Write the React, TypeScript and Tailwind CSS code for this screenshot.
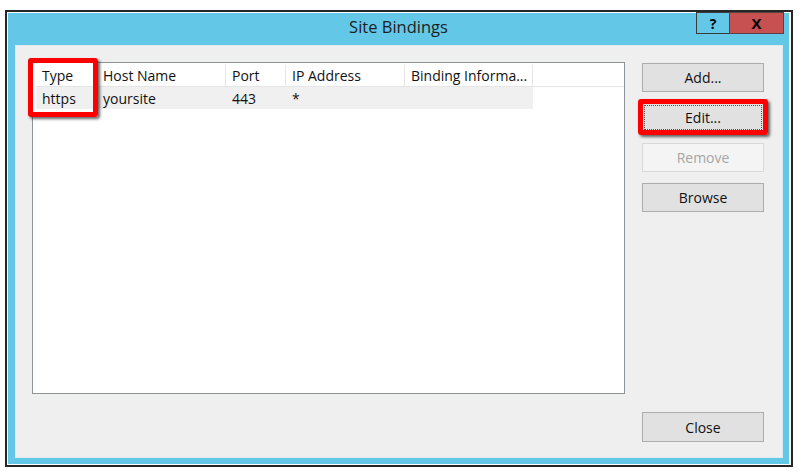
const font = { fontFamily: '"Open Sans", "Noto Sans", sans-serif' };

interface Column {
  label: string;
  width: string;
}

const columns: Column[] = [
  { label: 'Type', width: 'w-[61px]' },
  { label: 'Host Name', width: 'w-[129px]' },
  { label: 'Port', width: 'w-[60px]' },
  { label: 'IP Address', width: 'w-[119px]' },
  { label: 'Binding Informa...', width: 'w-[128px]' },
];

const row = ['https', 'yoursite', '443', '*', ''];

const DialogButton = ({ label, disabled, focused, tall }: { label: string; disabled?: boolean; focused?: boolean; tall?: boolean }) => (
  <div
    className={`flex w-[122px] items-center justify-center border text-[14px] ${tall ? 'h-[30px]' : 'h-[29px]'} ${
      disabled ? 'border-[#d9d9d9] bg-[#f4f4f4] text-[#a6a6a6]' : focused ? 'border-[#2a2a2a] bg-[#e1e1e1] text-[#111]' : 'border-[#adadad] bg-[#e1e1e1] text-[#111]'
    }`}
  >
    {focused ? (
      <div className="flex h-[25px] w-[118px] items-center justify-center border border-dotted border-[#555]">{label}</div>
    ) : (
      label
    )}
  </div>
);

export default function App() {
  return (
    <div className="relative h-[475px] w-[799px] overflow-hidden bg-white pl-[5px] pt-[10px]" style={font}>
      <div className="h-[457px] w-[788px] border-2 border-[#262626] bg-white py-px pl-px pr-[2px]">
        <div className="flex h-full flex-col bg-[#63c8e8] pb-[6px]">
          {/* title bar */}
          <div className="relative flex h-[32px] items-center justify-center pb-[4px]">
            <span className="text-[16.5px] text-[#1e1e1e]">Site Bindings</span>
            <div className="absolute right-[5px] top-[-1px] flex">
              <div className="flex h-[22px] w-[33px] items-center justify-center border border-r-0 border-[#3a3a3a] text-[14px] font-bold text-black">?</div>
              <div className="flex h-[22px] w-[55px] items-center justify-center border border-[#5a4040] bg-[#c75050] text-[15px] font-bold text-black">X</div>
            </div>
          </div>

          {/* content */}
          <div className="ml-[7px] mr-[6px] flex flex-1 items-stretch border border-[#dfe9ee] bg-[#efefef] pb-[15px] pl-[16px] pt-[16px]">
            <div className="h-[332px] w-[593px] border border-[#8f939a] bg-white pl-[3px] pt-[2px] text-[14px] text-[#111]">
              <div className="flex h-[22px] border-b border-[#e5e5e5]">
                {columns.map((col) => (
                  <div key={col.label} className={`${col.width} flex items-center border-r border-[#e5e5e5] pl-[6px] whitespace-nowrap`}>
                    {col.label}
                  </div>
                ))}
              </div>
              <div className="flex h-[22px] w-[497px] bg-[#f0f0f0]">
                {row.map((cell, i) => (
                  <div key={i} className={`${columns[i].width} flex items-center pl-[6px]`}>
                    {cell}
                  </div>
                ))}
              </div>
            </div>

            <div className="ml-[17px] flex flex-col pt-px">
              <div className="flex flex-col gap-[11px]">
                <DialogButton label="Add..." />
                <DialogButton label="Edit..." focused />
                <DialogButton label="Remove" disabled />
                <DialogButton label="Browse" />
              </div>
              <div className="mt-auto">
                <DialogButton label="Close" tall />
              </div>
            </div>
          </div>
        </div>
      </div>

      {/* annotation boxes */}
      <div className="absolute left-[28px] top-[58px] h-[59px] w-[70px] rounded-[3px] border-[5px] border-[#ff0000] shadow-[2px_2px_3px_rgba(0,0,0,0.6)]" />
      <div className="absolute left-[638px] top-[99px] h-[36px] w-[130px] rounded-[3px] border-[5px] border-[#ff0000] shadow-[2px_2px_3px_rgba(0,0,0,0.6)]" />
    </div>
  );
}
